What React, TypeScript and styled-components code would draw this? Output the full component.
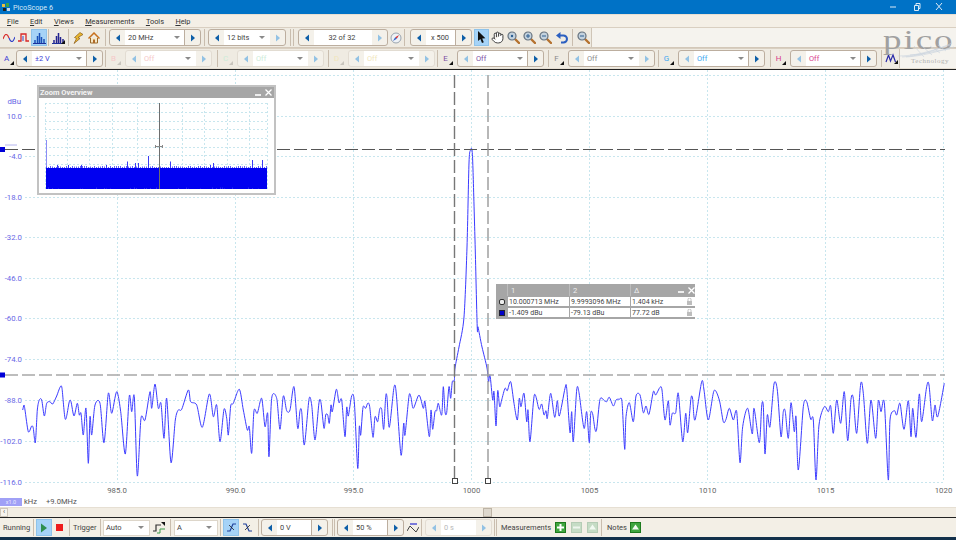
import styled, { createGlobalStyle } from "styled-components";
import { Hand } from "lucide-react";

type Pt = [number, number];

const UI_FONT = `Roboto, "Liberation Sans", sans-serif`;

// trace points read off crops of the plot: zoom units, 3 per pixel, y from 370
const fromCrop = (ox: number, pts: Pt[]): Pt[] =>
  pts.map(([x, y]) => [ox + x / 3, 370 + y / 3]);

const TRACE: Pt[] = [
  ...fromCrop(0, [[68,120],[72,105],[75,120],[85,185],[95,168],[100,175],[106,218],[112,120],[118,90],[125,90],[133,138],[140,100],[150,95],[158,102],[170,78],[180,52],[186,55],[196,148],[208,95],[213,95],[222,138],[232,100],[238,135],[243,130],[250,195],[258,115],[265,280],[270,140],[275,195],[285,105],[300,100],[312,218],[325,70],[335,130],[350,65],[362,125],[376,252],[388,78],[395,125],[403,80],[412,318],[423,145],[435,150],[450,65],[455,115],[465,42],[475,115],[483,100],[492,205],[500,85],[513,278],[526,150],[535,120],[545,118],[565,60],[572,95],[590,105],[607,172],[628,72],[640,140],[650,105],[660,215],[672,118],[680,145],[685,195],[692,108],[700,100],[718,58],[730,120],[742,180],[748,170],[755,250],[762,122],[772,130],[785,85],[795,170],[803,130],[807,260],[815,85],[830,85],[840,178],[850,78],[860,122],[870,120],[882,50],[893,175]]),
  ...fromCrop(295, [[15,122],[20,125],[28,225],[42,88],[50,105],[60,210],[72,98],[78,98],[87,175],[92,135],[98,135],[103,160],[108,105],[112,125],[124,58],[132,98],[140,90],[150,200],[155,112],[160,138],[170,78],[178,95],[188,295],[193,170],[197,195],[204,112],[212,115],[218,100],[224,110],[234,202],[240,140],[248,155],[254,118],[260,118],[266,178],[272,80],[276,82],[283,172],[297,52],[304,72],[318,255],[326,160],[330,195],[342,78],[348,82],[355,115],[372,75],[385,115],[390,95],[403,200],[408,120],[413,178],[420,125],[425,122],[430,100],[440,135],[445,50],[450,125],[455,128],[462,50],[467,85],[472,35],[478,32]]),
  [455,368],[459,347],[464,317],[467,247],[469,163],[470.5,150],[472,150],[473,170],[475,240],[477,320],[477.5,332],[478,327],[482,347],[487,368],[488.5,382],
  ...fromCrop(470, [[60,15],[68,90],[72,65],[78,168],[83,62],[89,110],[95,90],[105,55],[112,62],[122,35],[132,100],[142,150],[148,85],[153,110],[162,70],[170,155],[174,120],[180,215],[193,75],[207,118],[215,102],[222,135],[228,122],[232,145],[242,70],[254,142],[262,92],[268,138],[285,55],[290,55],[300,188],[305,125],[310,215],[320,60],[327,68],[342,175],[350,125],[358,218],[362,130],[368,132],[375,178],[380,177],[390,88],[403,92],[410,95],[418,82],[430,108],[438,90],[448,88],[456,95],[464,238],[468,140],[478,98],[490,155],[498,78],[510,75]]),
  ...fromCrop(640, [[10,128],[18,108],[27,133],[40,65],[47,75],[60,52],[66,60],[75,150],[85,92],[90,165],[97,130],[107,128],[115,70],[128,215],[137,130],[143,188],[153,85],[158,88],[165,150],[185,35],[192,60],[205,150],[222,62],[238,90],[250,155],[258,148],[268,115],[280,150],[290,125],[300,278],[308,170],[323,115],[337,192],[342,115],[358,218],[365,108],[370,108],[375,252],[382,135],[390,170],[402,42],[412,60],[423,200],[430,125],[436,125],[445,205],[453,98],[463,185],[468,140],[475,300],[490,110],[500,95],[512,148],[520,150],[528,330],[537,165],[553,110],[565,125],[572,108],[580,190],[590,90],[602,160],[613,65],[623,212],[633,88],[640,85],[650,190],[662,42],[670,70],[682,220],[693,90],[707,205],[715,92],[723,125],[733,98],[745,330],[750,150],[763,122],[770,135],[780,100],[792,178],[805,92],[813,200],[818,115],[828,202],[838,72],[845,155],[860,50],[867,45],[877,152],[885,105],[893,140],[913,40]]),
];

// rounds the corners a little, the real trace is interpolated between bins
function smoothPath(pts: Pt[]) {
  let d = `M${pts[0][0].toFixed(1)} ${pts[0][1].toFixed(1)}`;
  for (let i = 0; i < pts.length - 1; i++) {
    const p0 = pts[Math.max(i - 1, 0)];
    const p1 = pts[i];
    const p2 = pts[i + 1];
    const p3 = pts[Math.min(i + 2, pts.length - 1)];
    const k = 0.14;
    const c1x = p1[0] + (p2[0] - p0[0]) * k;
    const c1y = p1[1] + (p2[1] - p0[1]) * k;
    const c2x = p2[0] - (p3[0] - p1[0]) * k;
    const c2y = p2[1] - (p3[1] - p1[1]) * k;
    d += `C${c1x.toFixed(1)} ${c1y.toFixed(1)} ${c2x.toFixed(1)} ${c2y.toFixed(1)} ${p2[0].toFixed(1)} ${p2[1].toFixed(1)}`;
  }
  return d;
}

const Y_TICKS: [string, number][] = [
  ["10.0", 116], ["-4.0", 156], ["-18.0", 197], ["-32.0", 237], ["-46.0", 278],
  ["-60.0", 318], ["-74.0", 359], ["-88.0", 400], ["-102.0", 441], ["-116.0", 481.5],
];
const X_TICKS: [string, number][] = [
  ["985.0", 117], ["990.0", 235.5], ["995.0", 353.5], ["1000", 471.5],
  ["1005", 589.5], ["1010", 707.5], ["1015", 825.5], ["1020", 943.5],
];

const CHANNELS = [
  { ch: "A", label: "±2 V", color: "#3d3dd6", on: true, width: 107, rightOn: true },
  { ch: "B", label: "Off", color: "#f6c9c9", on: false, width: 112, rightOn: false },
  { ch: "C", label: "Off", color: "#cdebd8", on: false, width: 111, rightOn: false },
  { ch: "D", label: "Off", color: "#f1e6bb", on: false, width: 109, rightOn: false },
  { ch: "E", label: "Off", color: "#7d4fa3", on: true, width: 111, rightOn: true },
  { ch: "F", label: "Off", color: "#8a8a8a", on: true, width: 110, rightOn: false },
  { ch: "G", label: "Off", color: "#3ba6f0", on: true, width: 112, rightOn: true },
  { ch: "H", label: "Off", color: "#d8408a", on: true, width: 111, rightOn: true },
];

const OVERVIEW_SPIKES: [number, number][] = [
  [57, 165], [68, 165], [81, 165], [106, 165], [127, 161.5], [135, 163], [138, 163],
  [148, 156], [170, 161.5], [210, 165], [213, 163], [252, 160], [262, 160],
];

// small noise along both edges of the overview's solid band
const overviewNoise = () => {
  const out: string[] = [];
  let seed = 17;
  for (let x = 46; x < 267; x += 2) {
    seed = (seed * 73 + 41) % 101;
    out.push(`M${x + 0.5} ${167 - (seed % 3) * 0.5}V168`);
    if (seed % 4 === 0) out.push(`M${x + 0.5} ${187.5 + (seed % 3) * 0.5}V189`);
  }
  return out.join("");
};

const GlobalStyle = createGlobalStyle`
  html, body { margin: 0; padding: 0; background: #10304a; }
  body { font-family: ${UI_FONT}; font-size: 7.4px; color: #333; }
`;

const Frame = styled.div`
  position: relative;
  width: 956px;
  height: 540px;
  overflow: hidden;
  display: flex;
  flex-direction: column;
  background: #f3efe7;
`;

const TitleBar = styled.div`
  height: 14px;
  flex: none;
  background: #0072c6;
  color: #d6e8f6;
  display: flex;
  align-items: center;
  padding-left: 2px;
  gap: 2px;
  font-size: 7.2px;
`;

const WindowControls = styled.div`
  margin-left: auto;
  display: flex;
  align-items: center;
  padding-right: 11px;
  gap: 13px;
`;

const MenuBar = styled.div`
  height: 13px;
  flex: none;
  display: flex;
  align-items: center;
  gap: 11.4px;
  padding-left: 7px;
  font-size: 7.4px;
  color: #333;
  background: #f4efe6;
  border-top: 1px solid #e8dfd2;
  box-sizing: border-box;
`;

const ToolRow = styled.div<{ $h: number; $line: string }>`
  height: ${(p) => p.$h}px;
  flex: none;
  box-sizing: border-box;
  display: flex;
  background: #f5f3ee;
  border-top: 1px solid #d9cfc1;
  border-bottom: 1px solid ${(p) => p.$line};
`;

const ToolStrip = styled.div`
  display: flex;
  align-items: center;
  padding-left: 1px;
  background: #efebe2;
  border-right: 1px solid #cfc5b7;
`;

const IconBtn = styled.div<{ $w?: number; $active?: boolean; $ml?: number }>`
  width: ${(p) => p.$w ?? 16}px;
  height: 17px;
  flex: none;
  box-sizing: border-box;
  margin-left: ${(p) => p.$ml ?? 0}px;
  display: flex;
  align-items: center;
  justify-content: center;
  position: relative;
  background: ${(p) => (p.$active ? "#a6d3f7" : "transparent")};
  border: 1px solid ${(p) => (p.$active ? "#8fc3ea" : "transparent")};
`;

const Sep = styled.div<{ $l?: number; $r?: number; $h?: number }>`
  width: 1px;
  height: ${(p) => p.$h ?? 17}px;
  flex: none;
  background: #c9bdae;
  margin-left: ${(p) => p.$l ?? 2}px;
  margin-right: ${(p) => p.$r ?? 2}px;
`;

const SpinGroup = styled.div<{ $ml?: number; $off?: boolean }>`
  display: flex;
  flex: none;
  height: 17px;
  box-sizing: border-box;
  margin-left: ${(p) => p.$ml ?? 0}px;
  border: 1px solid ${(p) => (p.$off ? "#e2dcd2" : "#bcae9f")};
  border-radius: 3px;
  background: #f4f1ea;
`;

const SpinArrow = styled.div`
  width: 15px;
  flex: none;
  display: flex;
  align-items: center;
  justify-content: center;
`;

const SpinField = styled.div<{ $w: number; $color?: string; $center?: boolean; $raisedRight?: boolean }>`
  width: ${(p) => p.$w}px;
  flex: none;
  background: #fff;
  color: ${(p) => p.$color ?? "#444"};
  display: flex;
  align-items: center;
  justify-content: ${(p) => (p.$center ? "center" : "space-between")};
  padding: 0 4px 0 3px;
  box-sizing: border-box;
  font-size: 7.4px;
  border-right: 1px solid ${(p) => (p.$raisedRight ? "#bcae9f" : "#fff")};
`;

const Caret = styled.span`
  width: 0;
  height: 0;
  border-left: 3.5px solid transparent;
  border-right: 3.5px solid transparent;
  border-top: 3.5px solid #8a8a8a;
`;

const ChannelBlock = styled.div<{ $w: number }>`
  width: ${(p) => p.$w}px;
  flex: none;
  display: flex;
  align-items: center;
`;

const ChannelLetter = styled.div<{ $color: string }>`
  width: 14px;
  height: 17px;
  flex: none;
  position: relative;
  color: ${(p) => p.$color};
  font-size: 8px;
  display: flex;
  align-items: center;
  justify-content: center;
  padding-right: 3px;
  box-sizing: border-box;
`;

const CornerMark = styled.span<{ $off?: boolean }>`
  position: absolute;
  right: 1px;
  bottom: 2px;
  width: 0;
  height: 0;
  border-left: 4px solid transparent;
  border-bottom: 4px solid ${(p) => (p.$off ? "#c9c5bd" : "#111")};
`;

const BlockSep = styled(Sep)`
  margin-left: auto;
`;

const Plot = styled.div`
  flex: 1;
  position: relative;
  background: #fff;
  border-top: 1px solid #222;
`;

const PlotSvg = styled.svg`
  display: block;
  width: 956px;
  height: 437px;
`;

const AxisBadge = styled.span`
  background: #a0a0f6;
  color: #e8e8ff;
  font-size: 5.5px;
  width: 22px;
  height: 8px;
  display: inline-flex;
  align-items: center;
  justify-content: center;
`;

const UnitRow = styled.div`
  position: absolute;
  left: 0;
  bottom: 1px;
  display: flex;
  align-items: center;
  color: #555;
  font-size: 7.6px;
`;

const UnitText = styled.span<{ $ml: number }>`
  margin-left: ${(p) => p.$ml}px;
`;

const OverviewWindow = styled.div`
  position: absolute;
  left: 37px;
  top: 15px;
  width: 239px;
  height: 110px;
  box-sizing: border-box;
  border: 2px solid #c2c2c2;
  background: #fff;
  display: flex;
  flex-direction: column;
`;

const FloatTitle = styled.div`
  height: 11px;
  flex: none;
  background: #a6a6a6;
  color: #f4f4f4;
  display: flex;
  align-items: center;
  justify-content: space-between;
  padding: 0 2px 0 1px;
  font-size: 7.5px;
  font-weight: 700;
`;

const FloatButtons = styled.div`
  display: flex;
  align-items: center;
  gap: 4px;
  color: #fff;
`;

const MeasureWindow = styled.div`
  position: absolute;
  left: 496px;
  top: 214px;
  width: 199px;
  box-sizing: border-box;
  background: #a6a6a6;
  padding-bottom: 1px;
  display: grid;
  grid-template-columns: 11px 62px 61px 53px 12px;
  font-size: 7px;
`;

const HeadCell = styled.div<{ $first?: boolean }>`
  height: 12px;
  color: #eee;
  display: flex;
  align-items: center;
  padding-left: 3px;
  font-size: 7.5px;
  border-left: ${(p) => (p.$first ? "none" : "1px solid #bcbcbc")};
`;

const HeadClose = styled.div`
  height: 12px;
  display: flex;
  align-items: center;
  justify-content: flex-end;
  position: relative;
`;

const RowIcon = styled.div`
  height: 10px;
  display: flex;
  align-items: center;
  justify-content: center;
  padding-top: 1px;
`;

const ValueCell = styled.div`
  height: 9px;
  margin: 1px 0 0 1px;
  background: #fff;
  color: #444;
  display: flex;
  align-items: center;
  padding-left: 1px;
  white-space: nowrap;
`;

const LockCell = styled.div`
  height: 9px;
  margin-top: 1px;
  background: #fff;
  display: flex;
  align-items: center;
  justify-content: center;
`;

const Logo = styled.div`
  position: absolute;
  left: 880px;
  top: 28px;
  width: 76px;
  height: 38px;
`;

const LogoWord = styled.div`
  position: absolute;
  left: 3px;
  top: 0;
  font-family: "Liberation Serif", serif;
  font-size: 28px;
  line-height: 24px;
  letter-spacing: 1.5px;
  color: #a0a0a0;
  transform: scaleX(1.32);
  transform-origin: left top;
`;

const LogoMesh = styled.svg`
  position: absolute;
  left: 0;
  top: 0;
`;

const LogoSub = styled.div`
  position: absolute;
  left: 31px;
  top: 29px;
  font-family: "Liberation Serif", serif;
  font-size: 7px;
  line-height: 9px;
  color: #b0b0b0;
  letter-spacing: 0.5px;
`;

const ScrollRow = styled.div`
  height: 11px;
  flex: none;
  box-sizing: border-box;
  display: flex;
  justify-content: space-between;
  background: #f2ede3;
  border-top: 1px solid #e6dfd3;
  border-bottom: 1px solid #222;
  position: relative;
`;

const ScrollEnd = styled.div`
  width: 8px;
  background: #f7f4ee;
  border: 1px solid #cfc7ba;
  box-sizing: border-box;
  font-size: 7px;
  line-height: 7px;
  text-align: center;
  color: #555;
`;

const ScrollThumb = styled.div`
  position: absolute;
  left: 483px;
  top: 0;
  width: 9px;
  height: 9px;
  box-sizing: border-box;
  background: #ded8cd;
  border: 1px solid #bdb4a6;
`;

const BottomBar = styled.div`
  height: 19px;
  flex: none;
  display: flex;
  align-items: center;
  padding-left: 3px;
  background: #f3efe6;
  color: #444;
`;

const BarLabel = styled.span<{ $w: number; $ml?: number }>`
  font-size: 7.5px;
  flex: none;
  width: ${(p) => p.$w}px;
  white-space: nowrap;
  margin-left: ${(p) => p.$ml ?? 0}px;
`;

const PlainSelect = styled.div<{ $w: number }>`
  width: ${(p) => p.$w}px;
  height: 16px;
  flex: none;
  box-sizing: border-box;
  background: #fff;
  border: 1px solid #ddd6ca;
  display: flex;
  align-items: center;
  justify-content: space-between;
  padding: 0 5px 0 2px;
  font-size: 7.5px;
`;

const BottomStrip = styled.div`
  height: 3px;
  flex: none;
  background: #12304a;
`;

const Tri = ({ dir, on }: { dir: "l" | "r"; on: boolean }) => (
  <svg width="6" height="8" viewBox="0 0 6 8">
    <polygon
      points={dir === "l" ? "5,0.5 5,7.5 1,4" : "1,0.5 1,7.5 5,4"}
      fill={on ? "#0e5fa8" : "#93c2e4"}
    />
  </svg>
);

interface SpinnerProps {
  text: string;
  field: number;
  ml?: number;
  color?: string;
  caret?: boolean;
  leftOn?: boolean;
  rightOn?: boolean;
  off?: boolean;
  center?: boolean;
}

function Spinner({ text, field, ml, color, caret, leftOn = true, rightOn = true, off, center }: SpinnerProps) {
  return (
    <SpinGroup $ml={ml} $off={off}>
      <SpinArrow><Tri dir="l" on={leftOn} /></SpinArrow>
      <SpinField $w={field} $color={color} $center={center} $raisedRight={rightOn}>
        <span>{text}</span>
        {caret && <Caret />}
      </SpinField>
      <SpinArrow><Tri dir="r" on={rightOn} /></SpinArrow>
    </SpinGroup>
  );
}

const Magnifier = ({ mark }: { mark?: "plus" | "minus" | "dot" }) => (
  <svg width="13" height="13" viewBox="0 0 13 13">
    <path d="M8 8 L12 12" stroke="#b5722f" strokeWidth="2.4" strokeLinecap="round" />
    <circle cx="5" cy="5" r="4" fill="#c3d2de" stroke="#66727e" strokeWidth="1.2" />
    {mark === "plus" && <path d="M3 5h4M5 3v4" stroke="#2c5f92" strokeWidth="1" />}
    {mark === "minus" && <path d="M3 5h4" stroke="#2c5f92" strokeWidth="1" />}
    {mark === "dot" && <circle cx="5" cy="5" r="1.2" fill="#2c5f92" />}
  </svg>
);

const Bars = ({ dark }: { dark?: boolean }) => (
  <svg width="13" height="12" viewBox="0 0 13 12">
    <path d="M0 11.5h13" stroke="#1c2f9a" strokeWidth="1" />
    <path
      d="M2 11V8M4.5 11V4M6.5 11V1M8.5 11V5M11 11V7"
      stroke={dark ? "#23238f" : "#1a50b8"}
      strokeWidth="1.5"
    />
    {dark && <polygon points="13,8 13,12 9,12" fill="#111" />}
  </svg>
);

const GreenSquare = ({ kind, off }: { kind: "plus" | "minus" | "up"; off?: boolean }) => (
  <svg width="11" height="11" viewBox="0 0 11 11">
    <rect x="0.5" y="0.5" width="10" height="10" fill={off ? "#c5dcc5" : "#3fa53f"} stroke={off ? "#b5ccb5" : "#1d7a1d"} />
    {kind === "plus" && <path d="M5.5 2v7M2 5.5h7" stroke="#fff" strokeWidth="2" />}
    {kind === "minus" && <path d="M2 5.5h7" stroke="#eef6ee" strokeWidth="2" />}
    {kind === "up" && <polygon points="5.5,2.5 9,7.5 2,7.5" fill="#f2faf2" />}
  </svg>
);

const FloatClose = () => (
  <svg width="7" height="7" viewBox="0 0 7 7">
    <path d="M0.5 0.5l6 6M6.5 0.5l-6 6" stroke="#fff" strokeWidth="1.3" />
  </svg>
);

const FloatMin = () => (
  <svg width="6" height="6" viewBox="0 0 6 6">
    <path d="M0 5h6" stroke="#fff" strokeWidth="1.6" />
  </svg>
);

const Lock = () => (
  <svg width="5" height="7" viewBox="0 0 5 7">
    <rect x="0" y="3" width="5" height="4" fill="#bdbdbd" />
    <path d="M1 3V1.5a1.5 1.5 0 0 1 3 0V3" fill="none" stroke="#bdbdbd" />
  </svg>
);

function PlotDrawing() {
  return (
    <PlotSvg viewBox="0 70 956 437">
      <g stroke="#c8e6ee" strokeWidth="1" strokeDasharray="2 2">
        <path d="M25 75.5H944" />
        {Y_TICKS.map(([label, y]) => (
          <path key={label} d={`M25 ${Math.round(y) + 0.5}H944`} />
        ))}
        {X_TICKS.map(([label, x]) => (
          <path key={label} d={`M${Math.floor(x) + 0.5} 70V481`} />
        ))}
      </g>
      <path d={smoothPath(TRACE)} fill="none" stroke="#3b3bff" strokeWidth="1" strokeLinejoin="round" />
      <path d="M5 149.5H945" stroke="#555" strokeWidth="1" strokeDasharray="13 4" />
      <path d="M5 375H945" stroke="#a8a8a8" strokeWidth="1.6" strokeDasharray="13 4" />
      <path d="M454.5 75V478" stroke="#777" strokeWidth="1.4" strokeDasharray="13 4" />
      <path d="M488 75V478" stroke="#999" strokeWidth="1.4" strokeDasharray="13 4" />
      <rect x="452.5" y="478.5" width="5" height="5" fill="#fff" stroke="#444" />
      <rect x="485.5" y="478.5" width="5" height="5" fill="#fff" stroke="#444" />
      <rect x="0" y="147" width="5" height="5" fill="#0000d8" />
      <rect x="0" y="372.5" width="5" height="5" fill="#0000d8" />
      <path d="M5 145H17" stroke="#b4b4ee" strokeWidth="1" />
      <g fontFamily={UI_FONT} fontSize="7.8" fill="#6868e6" textAnchor="end">
        <text x="21" y="104">dBu</text>
        {Y_TICKS.map(([label, y]) => (
          <text key={label} x="22" y={y + 3}>{label}</text>
        ))}
      </g>
      <g fontFamily={UI_FONT} fontSize="7.8" fill="#666" textAnchor="middle">
        {X_TICKS.map(([label, x]) => (
          <text key={label} x={x} y="493">{label}</text>
        ))}
      </g>
    </PlotSvg>
  );
}

function OverviewDrawing() {
  const verticals = [45, 67, 89, 112, 137, 159, 182, 204, 227, 249, 267];
  const horizontals = [103, 112, 121, 129, 138, 147, 155, 164, 172, 181];
  return (
    <svg width="235" height="95" viewBox="39 98 235 95">
      <g stroke="#c8e6ee" strokeDasharray="2 2">
        {verticals.map((x) => <path key={x} d={`M${x + 0.5} 103V189`} />)}
        {horizontals.map((y) => <path key={y} d={`M45 ${y + 0.5}H267`} />)}
      </g>
      <rect x="46" y="168" width="221" height="21" fill="#0000f0" />
      <path d="M46.5 140V168" stroke="#8c8cf6" />
      <g stroke="#3a3af4">
        {OVERVIEW_SPIKES.map(([x, y]) => <path key={x} d={`M${x + 0.5} ${y}V168`} />)}
      </g>
      <path d={overviewNoise()} stroke="#3a3af4" strokeWidth="0.8" />
      <path d="M159.5 103V189" stroke="#6e6e6e" strokeWidth="1" />
      <path d="M155 146.5H163M155.5 145V148M162.5 145V148" stroke="#888" />
    </svg>
  );
}

export default function App() {
  return (
    <Frame>
      <GlobalStyle />
      <TitleBar>
        <svg width="9" height="9" viewBox="0 0 9 9">
          <rect x="0" y="1" width="3" height="3" fill="#e8c040" />
          <rect x="4" y="0" width="3" height="4" fill="#38a048" />
          <rect x="1" y="5" width="3" height="3" fill="#202020" />
          <rect x="5" y="5" width="3" height="3" fill="#c8d8e8" />
        </svg>
        <span>PicoScope 6</span>
        <WindowControls>
          <svg width="10" height="10" viewBox="0 0 10 10"><path d="M1 5h6" stroke="#dceaf6" /></svg>
          <svg width="10" height="10" viewBox="0 0 10 10"><path d="M2.5 3.5h4v5h-4zM4 3V1.5h4v5H7" fill="none" stroke="#dceaf6" /></svg>
          <svg width="10" height="10" viewBox="0 0 10 10"><path d="M1 1l6 7M7 1L1 8" stroke="#dceaf6" /></svg>
        </WindowControls>
      </TitleBar>

      <MenuBar>
        <span><u>F</u>ile</span>
        <span><u>E</u>dit</span>
        <span><u>V</u>iews</span>
        <span><u>M</u>easurements</span>
        <span><u>T</u>ools</span>
        <span><u>H</u>elp</span>
      </MenuBar>

      <ToolRow $h={21} $line="#d3c8b9">
        <ToolStrip>
          <IconBtn $w={15}>
            <svg width="12" height="8" viewBox="0 0 12 8">
              <path d="M0 5C2 -1 4 -1 6 4" fill="none" stroke="#d83030" strokeWidth="1.2" />
              <path d="M6 4C8 9 10 9 12 3" fill="none" stroke="#3040c8" strokeWidth="1.1" />
            </svg>
          </IconBtn>
          <IconBtn $w={15}>
            <svg width="11" height="9" viewBox="0 0 11 9">
              <path d="M0 8h3V1h5v7h3" fill="none" stroke="#d82828" strokeWidth="1.3" />
              <path d="M5 3v5" stroke="#3040c8" strokeWidth="1" />
            </svg>
          </IconBtn>
          <IconBtn $active><Bars /></IconBtn>
          <Sep $l={1} $r={2} />
          <IconBtn $w={15}><Bars dark /></IconBtn>
          <Sep $l={2} $r={1} />
          <IconBtn>
            <svg width="12" height="12" viewBox="0 0 12 12">
              <path d="M8 0.5l3 2-5 3 2 1-6 5 2.5-5-2-1z" fill="#e8b830" stroke="#8a5a18" strokeWidth="0.7" />
            </svg>
          </IconBtn>
          <IconBtn>
            <svg width="12" height="12" viewBox="0 0 12 12">
              <path d="M2.5 6v5h7V6" fill="#f6e8c8" stroke="#9a6a28" />
              <path d="M0.5 6.5L6 1l5.5 5.5" fill="none" stroke="#c8701c" strokeWidth="1.5" />
              <rect x="5" y="7.5" width="2" height="3.5" fill="#b06a28" />
            </svg>
          </IconBtn>
          <Sep $l={3} $r={3} />
          <Spinner text="20 MHz" field={60} caret />
          <Sep $l={3} $r={3} />
          <Spinner text="12 bits" field={46} caret rightOn={false} />
          <Sep $l={4} $r={2} />
          <Sep $l={0} $r={4} />
          <Spinner text="32 of 32" field={58} center rightOn={false} />
          <IconBtn $w={15}>
            <svg width="12" height="12" viewBox="0 0 12 12">
              <circle cx="6" cy="6" r="5" fill="#eef2f6" stroke="#9aa4ae" />
              <polygon points="9,3 6.8,6.8 5.2,5.2" fill="#d83030" />
              <polygon points="3,9 5.2,5.2 6.8,6.8" fill="#3060c8" />
            </svg>
          </IconBtn>
          <Sep $l={1} $r={5} />
          <Spinner text="x 500" field={30} center />
          <IconBtn $w={15} $active $ml={2}>
            <svg width="9" height="13" viewBox="0 0 9 13">
              <polygon points="1,0 1,10 3.4,8 5,12 6.8,11.2 5.2,7.4 8.4,7.2" fill="#111" />
            </svg>
          </IconBtn>
          <IconBtn><Hand size={13} color="#222" fill="#fff" strokeWidth={1.6} /></IconBtn>
          <IconBtn><Magnifier mark="dot" /></IconBtn>
          <IconBtn><Magnifier mark="plus" /></IconBtn>
          <IconBtn $w={17}><Magnifier mark="minus" /></IconBtn>
          <IconBtn>
            <svg width="12" height="12" viewBox="0 0 12 12">
              <path d="M3 3.5h4.5a3 3 0 0 1 0 7H5" fill="none" stroke="#2b5fc0" strokeWidth="2" />
              <polygon points="0,3.5 4.5,0 4.5,7" fill="#2b5fc0" />
            </svg>
          </IconBtn>
          <Sep $l={2} $r={2} />
          <IconBtn><Magnifier mark="minus" /></IconBtn>
        </ToolStrip>
      </ToolRow>

      <ToolRow $h={21} $line="#e6dfd3">
        <ToolStrip>
          {CHANNELS.map((c) => (
            <ChannelBlock key={c.ch} $w={c.width}>
              <ChannelLetter $color={c.color}>
                {c.ch}
                <CornerMark $off={!c.on} />
              </ChannelLetter>
              <Spinner
                text={c.label}
                field={55}
                ml={c.ch === "A" ? 1 : 3}
                color={c.color}
                caret
                leftOn={c.ch === "A"}
                rightOn={c.rightOn}
                off={!c.on}
              />
              <BlockSep $l={0} $r={2} />
            </ChannelBlock>
          ))}
          <IconBtn $w={15}>
            <svg width="13" height="11" viewBox="0 0 13 11">
              <path d="M1 9L3.5 2 5.5 8 8 2l2.5 7" fill="none" stroke="#2a2aa8" strokeWidth="1.2" />
              <polygon points="13,7 13,11 9,11" fill="#111" />
            </svg>
          </IconBtn>
        </ToolStrip>
      </ToolRow>

      <Plot>
        <PlotDrawing />
        <OverviewWindow>
          <FloatTitle>
            <span>Zoom Overview</span>
            <FloatButtons><FloatMin /><FloatClose /></FloatButtons>
          </FloatTitle>
          <OverviewDrawing />
        </OverviewWindow>
        <MeasureWindow>
          <HeadCell $first />
          <HeadCell>1</HeadCell>
          <HeadCell>2</HeadCell>
          <HeadCell>Δ</HeadCell>
          <HeadClose>
            <FloatButtons><FloatMin /><FloatClose /></FloatButtons>
          </HeadClose>

          <RowIcon>
            <svg width="6" height="6" viewBox="0 0 6 6"><rect x="0.5" y="0.5" width="5" height="5" rx="1.5" fill="#eee" stroke="#333" /></svg>
          </RowIcon>
          <ValueCell>10.000713 MHz</ValueCell>
          <ValueCell>9.9993096 MHz</ValueCell>
          <ValueCell>1.404 kHz</ValueCell>
          <LockCell><Lock /></LockCell>

          <RowIcon>
            <svg width="6" height="6" viewBox="0 0 6 6"><rect x="0.5" y="0.5" width="5" height="5" fill="#0000c8" stroke="#223" /></svg>
          </RowIcon>
          <ValueCell>-1.409 dBu</ValueCell>
          <ValueCell>-79.13 dBu</ValueCell>
          <ValueCell>77.72 dB</ValueCell>
          <LockCell><Lock /></LockCell>
        </MeasureWindow>
        <UnitRow>
          <AxisBadge>x1.0</AxisBadge>
          <UnitText $ml={2}>kHz</UnitText>
          <UnitText $ml={9}>+9.0MHz</UnitText>
        </UnitRow>
      </Plot>

      <ScrollRow>
        <ScrollEnd>‹</ScrollEnd>
        <ScrollThumb />
      </ScrollRow>

      <BottomBar>
        <BarLabel $w={27}>Running</BarLabel>
        <Sep $l={3} $r={2} />
        <IconBtn $active>
          <svg width="8" height="10" viewBox="0 0 8 10"><polygon points="1,0.5 7,5 1,9.5" fill="#2f8f4f" /></svg>
        </IconBtn>
        <IconBtn $w={14}>
          <svg width="7" height="7" viewBox="0 0 7 7"><rect width="7" height="7" fill="#ee1c1c" /></svg>
        </IconBtn>
        <Sep $l={3} $r={3} />
        <BarLabel $w={24}>Trigger</BarLabel>
        <Sep $l={3} $r={2} />
        <PlainSelect $w={47}>Auto<Caret /></PlainSelect>
        <IconBtn $ml={1}>
          <svg width="12" height="12" viewBox="0 0 12 12">
            <path d="M0 9h3V3h5" fill="none" stroke="#333" strokeWidth="1.2" />
            <path d="M4 11h3V7h5" fill="none" stroke="#3a9a48" strokeWidth="1" />
            <polygon points="8,0 12,0 12,4" fill="#111" />
          </svg>
        </IconBtn>
        <Sep $l={3} $r={3} />
        <PlainSelect $w={44}>A<Caret /></PlainSelect>
        <Sep $l={2} $r={2} />
        <IconBtn $active>
          <svg width="11" height="11" viewBox="0 0 11 11">
            <path d="M1 9h3l3-7h3" fill="none" stroke="#1f3f9a" strokeWidth="1.2" />
            <path d="M3 3l5 5" stroke="#222" strokeWidth="0.8" />
          </svg>
        </IconBtn>
        <IconBtn>
          <svg width="11" height="11" viewBox="0 0 11 11">
            <path d="M1 2h3l3 7h3" fill="none" stroke="#1f3f9a" strokeWidth="1.2" />
            <path d="M3 8l5-5" stroke="#222" strokeWidth="0.8" />
          </svg>
        </IconBtn>
        <Sep $l={3} $r={2} />
        <Spinner text="0 V" field={35} />
        <Sep $l={4} $r={0} />
        <Sep $l={1} $r={2} />
        <Spinner text="50 %" field={35} />
        <IconBtn $w={17}>
          <svg width="12" height="10" viewBox="0 0 12 10">
            <path d="M0 8L3 3l3 3 3 3 3-5" fill="none" stroke="#444" strokeWidth="1" />
            <path d="M3 1h7" stroke="#2a2ad0" strokeWidth="1.2" />
          </svg>
        </IconBtn>
        <Sep $l={0} $r={3} />
        <Spinner text="0 s" field={35} off leftOn={false} rightOn={false} color="#b8b8b8" />
        <Sep $l={2} $r={1} />
        <Sep $l={0} $r={0} />
        <BarLabel $w={50} $ml={4}>Measurements</BarLabel>
        <IconBtn $ml={1}><GreenSquare kind="plus" /></IconBtn>
        <IconBtn><GreenSquare kind="minus" off /></IconBtn>
        <IconBtn><GreenSquare kind="up" off /></IconBtn>
        <Sep $l={1} $r={5} />
        <BarLabel $w={19}>Notes</BarLabel>
        <IconBtn $w={14} $ml={2}><GreenSquare kind="up" /></IconBtn>
      </BottomBar>
      <BottomStrip />

      <Logo>
        <LogoWord>pico</LogoWord>
        <LogoMesh width="76" height="38" viewBox="0 0 76 38">
          <g fill="none" stroke="#c8d2de" strokeWidth="0.6">
            <path d="M18 28C34 28 48 24 70 17" />
            <path d="M22 29C38 28 52 24 72 15" />
            <path d="M26 29C42 28 56 24 74 19" />
            <path d="M30 27C44 27 56 22 70 21" />
            <path d="M34 18L44 29M42 18L52 27M50 18L60 25M58 17L66 23" />
          </g>
        </LogoMesh>
        <LogoSub>Technology</LogoSub>
      </Logo>
    </Frame>
  );
}
